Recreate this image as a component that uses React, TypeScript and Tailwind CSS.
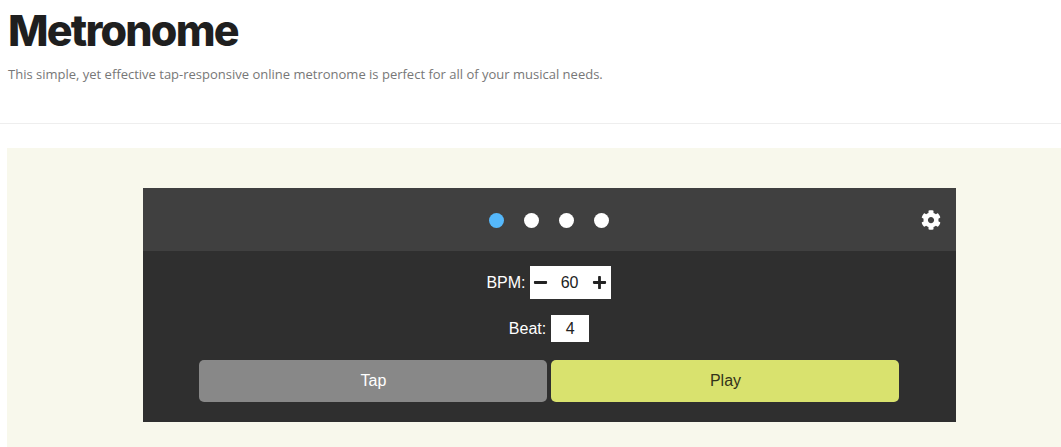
import React from 'react';
import { FaCog, FaMinus, FaPlus } from 'react-icons/fa';

const arial = "font-['Liberation_Sans',Arial,sans-serif]";

function Dot({ active }: { active?: boolean }) {
    return <span className={`w-[15px] h-[15px] rounded-full ${active ? 'bg-[#55b8fb]' : 'bg-white'}`} />;
}

export default function App() {
    return (
        <div className="h-[447px] overflow-hidden bg-white font-['Open_Sans',sans-serif]">
            {/* Header */}
            <header className="h-[124px] border-b border-[#eeeeee] px-2">
                <h1 className="pt-[4px] text-[43px] leading-[52px] font-extrabold tracking-[-1.8px] text-[#1f1f1f] font-['Inter',sans-serif]">
                    Metronome
                </h1>
                <p className="mt-[9px] text-[13px] leading-[18px] text-[#777777]">
                    This simple, yet effective tap-responsive online metronome is perfect for all of your musical needs.
                </p>
            </header>

            {/* Metronome panel */}
            <section className="mt-6 ml-[7px] h-[299px] bg-[#f8f8ec] pt-10 pl-[136px]">
                <div className={`w-[813px] ${arial}`}>
                    <div className="relative flex h-[63px] items-center justify-center gap-5 bg-[#404040] pt-[2px] pr-[2px]">
                        <Dot active />
                        <Dot />
                        <Dot />
                        <Dot />
                        <FaCog className="absolute right-[15px] top-[22px] h-[20px] w-[20px] text-white" />
                    </div>
                    <div className="flex h-[171px] flex-col items-center bg-[#2f2f2f] pt-[15px] text-[16px] text-white">
                        <div className="flex h-[33px] items-center gap-1 pr-[2px]">
                            <span className="pt-[1px]">BPM:</span>
                            <div className="flex h-[33px] w-[81px] items-center justify-between bg-white pl-[3px] pr-[4px] text-[#222222]">
                                <FaMinus className="h-[15px] w-[15px]" />
                                <span className="pt-[1px]">60</span>
                                <FaPlus className="h-[15px] w-[15px]" />
                            </div>
                        </div>
                        <div className="mt-[16px] flex h-[27px] items-center gap-[5px] pr-[1px]">
                            <span>Beat:</span>
                            <div className="flex h-[27px] w-[38px] items-center justify-center bg-white text-[#222222]">4</div>
                        </div>
                        <div className="mt-[18px] flex gap-1 pr-[2px]">
                            <button className="h-[42px] w-[348px] rounded-[5px] bg-[#888888] pl-[2px] text-white">Tap</button>
                            <button className="h-[42px] w-[348px] rounded-[5px] bg-[#d9e26e] pl-[2px] text-[#33331a]">Play</button>
                        </div>
                    </div>
                </div>
            </section>
        </div>
    );
}
